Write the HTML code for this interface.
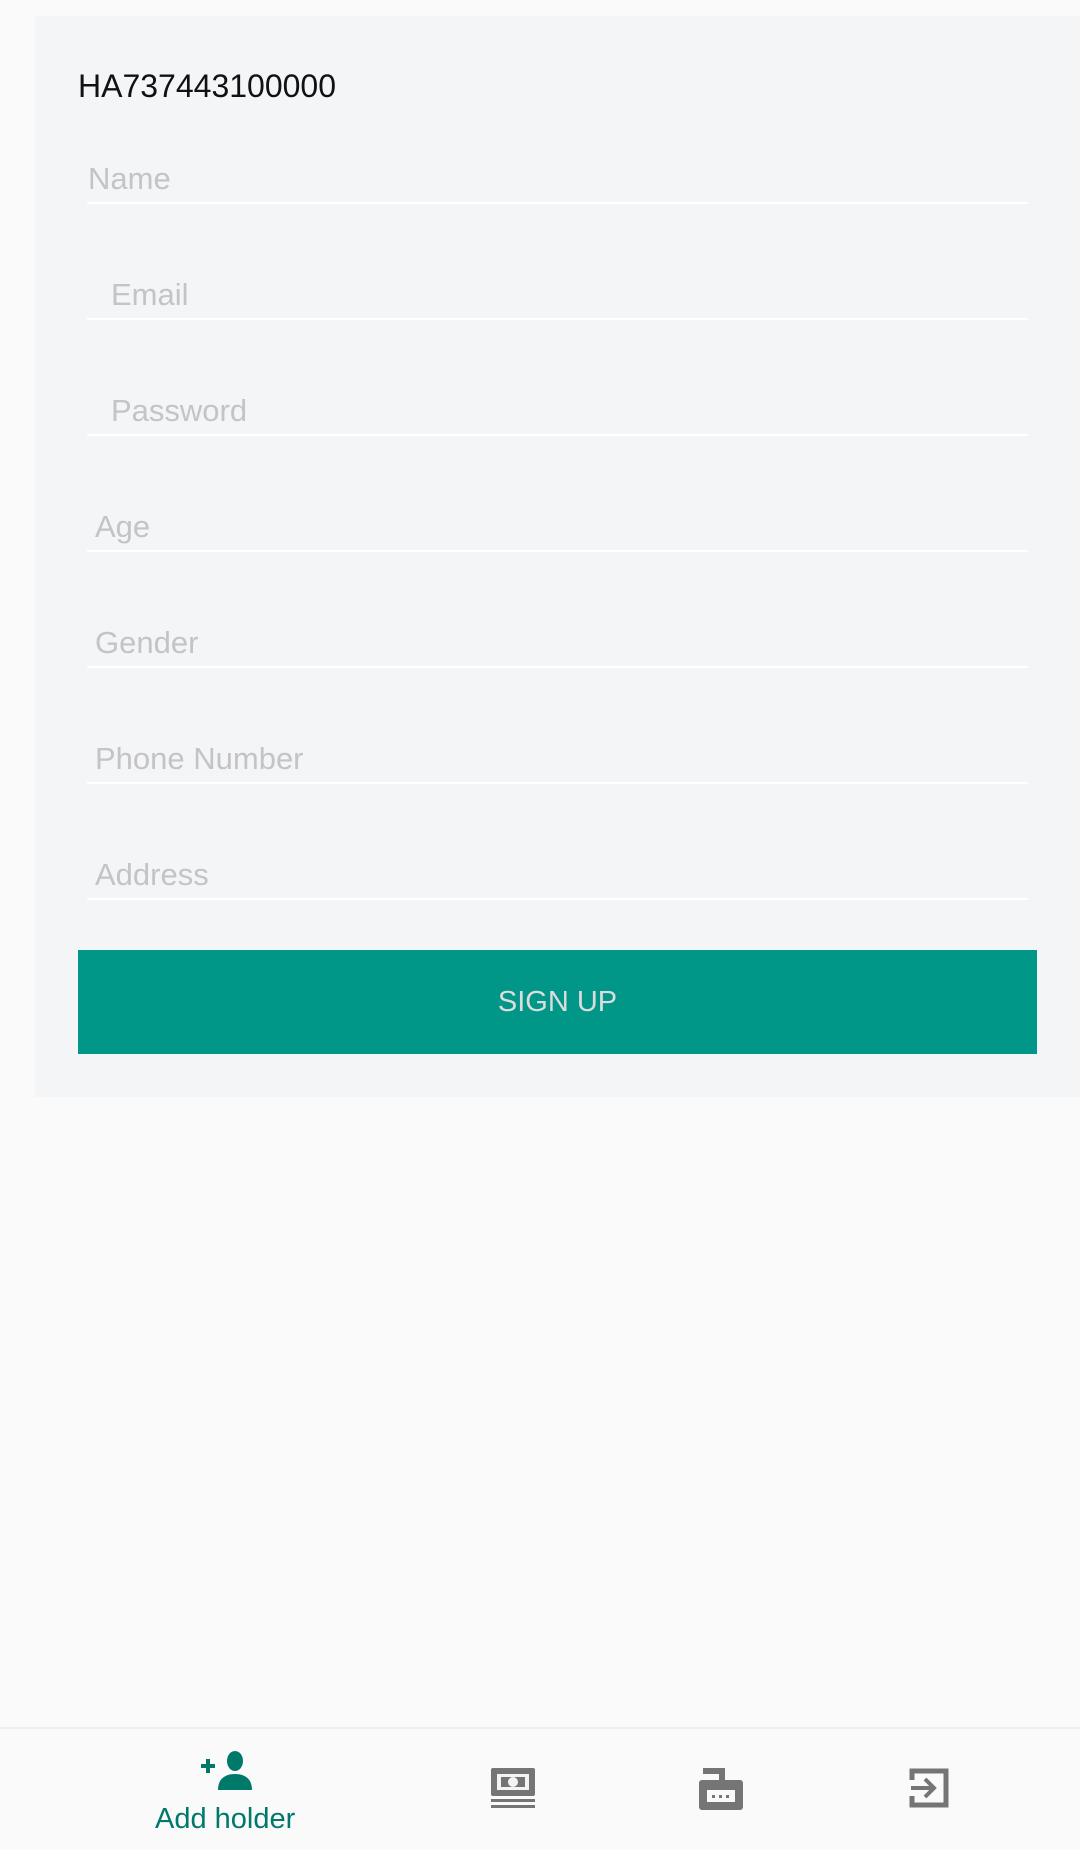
<!DOCTYPE html>
<html><head><meta charset="utf-8">
<style>
body{margin:0;width:1080px;height:1848px;background:#fafafa;font-family:"Liberation Sans",sans-serif;position:relative;overflow:hidden}
.card{position:absolute;left:35px;top:16px;width:1045px;height:1081px;background:#f4f5f7}
.abs{position:absolute}
.hdr{left:78px;top:66px;font-size:32px;color:#111;line-height:40px}
.lbl{font-size:31px;color:#c4c4c4;line-height:40px}
.line{position:absolute;left:87px;width:941px;height:2px;background:#fff}
.btn{left:78px;top:950px;width:959px;height:104px;background:#009688;color:#dcdcdc;font-size:29px;text-align:center;line-height:104px}
.nav{left:0;top:1727px;width:1080px;height:121px;background:#fafafa;border-top:2px solid #eeeeee}
</style></head><body>
<div class="card"></div>
<div class="abs hdr">HA737443100000</div>
<div class="abs lbl" style="left:88px;top:159px">Name</div><div class="line" style="top:202px"></div>
<div class="abs lbl" style="left:111px;top:275px">Email</div><div class="line" style="top:318px"></div>
<div class="abs lbl" style="left:111px;top:391px">Password</div><div class="line" style="top:434px"></div>
<div class="abs lbl" style="left:95px;top:507px">Age</div><div class="line" style="top:550px"></div>
<div class="abs lbl" style="left:95px;top:623px">Gender</div><div class="line" style="top:666px"></div>
<div class="abs lbl" style="left:95px;top:739px">Phone Number</div><div class="line" style="top:782px"></div>
<div class="abs lbl" style="left:95px;top:855px">Address</div><div class="line" style="top:898px"></div>
<div class="abs btn">SIGN UP</div>
<div class="abs nav"></div>
<svg class="abs" style="left:200px;top:1751px" width="54" height="40" viewBox="0 0 54 40">
<path d="M1 15h14M8 8v14" stroke="#00796b" stroke-width="4"/>
<ellipse cx="35" cy="10" rx="8" ry="10" fill="#00796b"/>
<path d="M18 39c0-12 8-16 17-16s17 4 17 16z" fill="#00796b"/>
</svg>
<div class="abs" style="left:155px;top:1802px;font-size:29px;color:#00796b;line-height:34px">Add holder</div>
<svg class="abs" style="left:491px;top:1768px" width="44" height="40" viewBox="0 0 44 40">
<rect x="0" y="0" width="44" height="28" rx="2" fill="#757575"/>
<rect x="6" y="6" width="32" height="16" fill="#f4f4f4"/>
<rect x="10" y="9" width="24" height="10" fill="#757575"/>
<ellipse cx="22" cy="14" rx="5" ry="5" fill="#f4f4f4"/>
<rect x="0" y="31" width="44" height="3" fill="#757575"/>
<rect x="0" y="37" width="44" height="3" fill="#757575"/>
</svg>
<svg class="abs" style="left:699px;top:1766px" width="44" height="44" viewBox="0 0 44 44">
<path d="M4 2h22v16h-6v-10h-16z" fill="#757575"/>
<rect x="0" y="14" width="44" height="30" rx="3" fill="#757575"/>
<rect x="8" y="24" width="28" height="12" fill="#fafafa"/>
<rect x="13" y="29" width="3" height="3" fill="#757575"/><rect x="20" y="29" width="3" height="3" fill="#757575"/><rect x="27" y="29" width="3" height="3" fill="#757575"/>
</svg>
<svg class="abs" style="left:909px;top:1768px" width="40" height="40" viewBox="0 0 40 40">
<path d="M3 12V3h34v34H3v-9" fill="none" stroke="#757575" stroke-width="5"/>
<path d="M2 20h22M16 11l9 9-9 9" fill="none" stroke="#757575" stroke-width="4"/>
</svg>
</body></html>
